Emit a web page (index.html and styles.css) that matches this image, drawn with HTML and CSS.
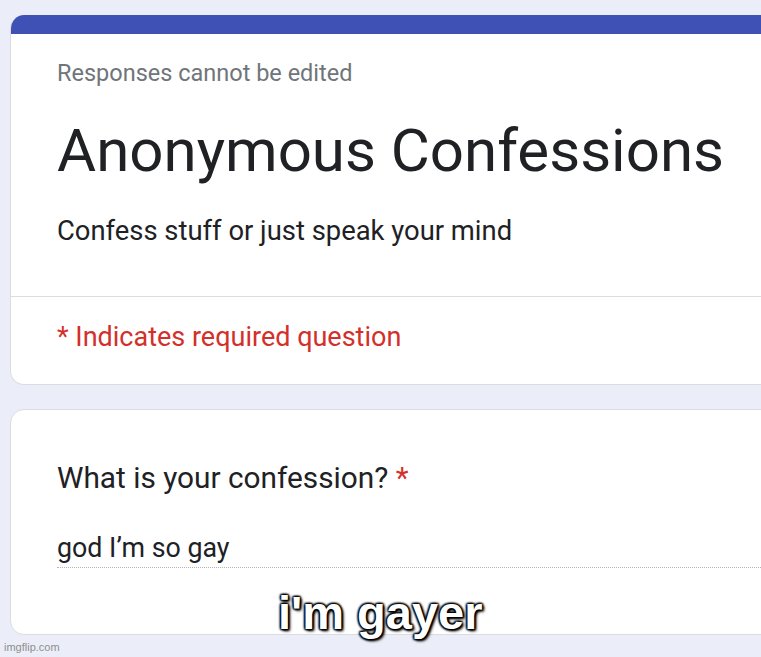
FILE: index.html
```html
<!DOCTYPE html>
<html>
<head>
<meta charset="utf-8">
<link rel="stylesheet" href="styles.css">
</head>
<body>
<div class="page">
  <section class="card card-head">
    <div class="bar"></div>
    <div class="head">
      <div class="note">Responses cannot be edited</div>
      <h1 class="title">Anonymous Confessions</h1>
      <div class="desc">Confess stuff or just speak your mind</div>
    </div>
    <div class="required">* Indicates required question</div>
  </section>
  <section class="card card-q">
    <div class="question">What is your confession? <span class="star">*</span></div>
    <div class="answer">god I’m so gay</div>
  </section>
</div>
<div class="caption">i'm gayer</div>
<div class="watermark">imgflip.com</div>
</body>
</html>
```
FILE: styles.css
```css
html, body {
  margin: 0;
  padding: 0;
  height: 100%;
  overflow: hidden;
}
body {
  background: #ebeef8;
  font-family: Roboto, "Liberation Sans", sans-serif;
  color: #202124;
  position: relative;
}
.page {
  padding: 15px 0 0 10px;
}
.card {
  width: 900px;
  background: #fff;
  border: 1px solid #dadce0;
  border-radius: 14px;
  box-sizing: border-box;
  overflow: hidden;
}
.card-head {
  border-top: none;
}
.bar {
  height: 19px;
  background: #3f51b5;
}
.head {
  padding: 25px 0 48px 46px;
  border-bottom: 1px solid #dadce0;
}
.note {
  font-size: 23.5px;
  line-height: 28px;
  color: #70757a;
}
.title {
  margin: 25px 0 0;
  font-size: 60px;
  font-weight: 400;
  line-height: 77px;
  color: #202124;
}
.desc {
  margin-top: 25px;
  font-size: 27.4px;
  line-height: 34px;
}
.required {
  padding: 23px 0 30px 46px;
  font-size: 27px;
  line-height: 34px;
  color: #d3302a;
}
.card-q {
  margin-top: 24px;
  padding: 49px 0 66px 46px;
}
.question {
  font-size: 29.8px;
  line-height: 38px;
}
.star {
  color: #d3302a;
}
.answer {
  margin-top: 34px;
  font-size: 26.8px;
  line-height: 34px;
  padding-bottom: 2px;
  border-bottom: 1px dotted #b4b4b4;
}
.caption {
  position: absolute;
  left: 278px;
  top: 586px;
  font-family: "Liberation Sans", Arial, sans-serif;
  font-weight: 700;
  font-size: 47px;
  line-height: 54px;
  color: #fff;
  text-shadow: 0 0 3px #000, 1px 1px 2px #000, -1px -1px 2px #000, 1px -1px 2px #000, -1px 1px 2px #000, 2px 2px 3px #000;
}
.watermark {
  position: absolute;
  left: 4px;
  top: 640px;
  font-family: "Liberation Sans", Arial, sans-serif;
  font-size: 11px;
  line-height: 14px;
  color: #8f8f8f;
}
```
